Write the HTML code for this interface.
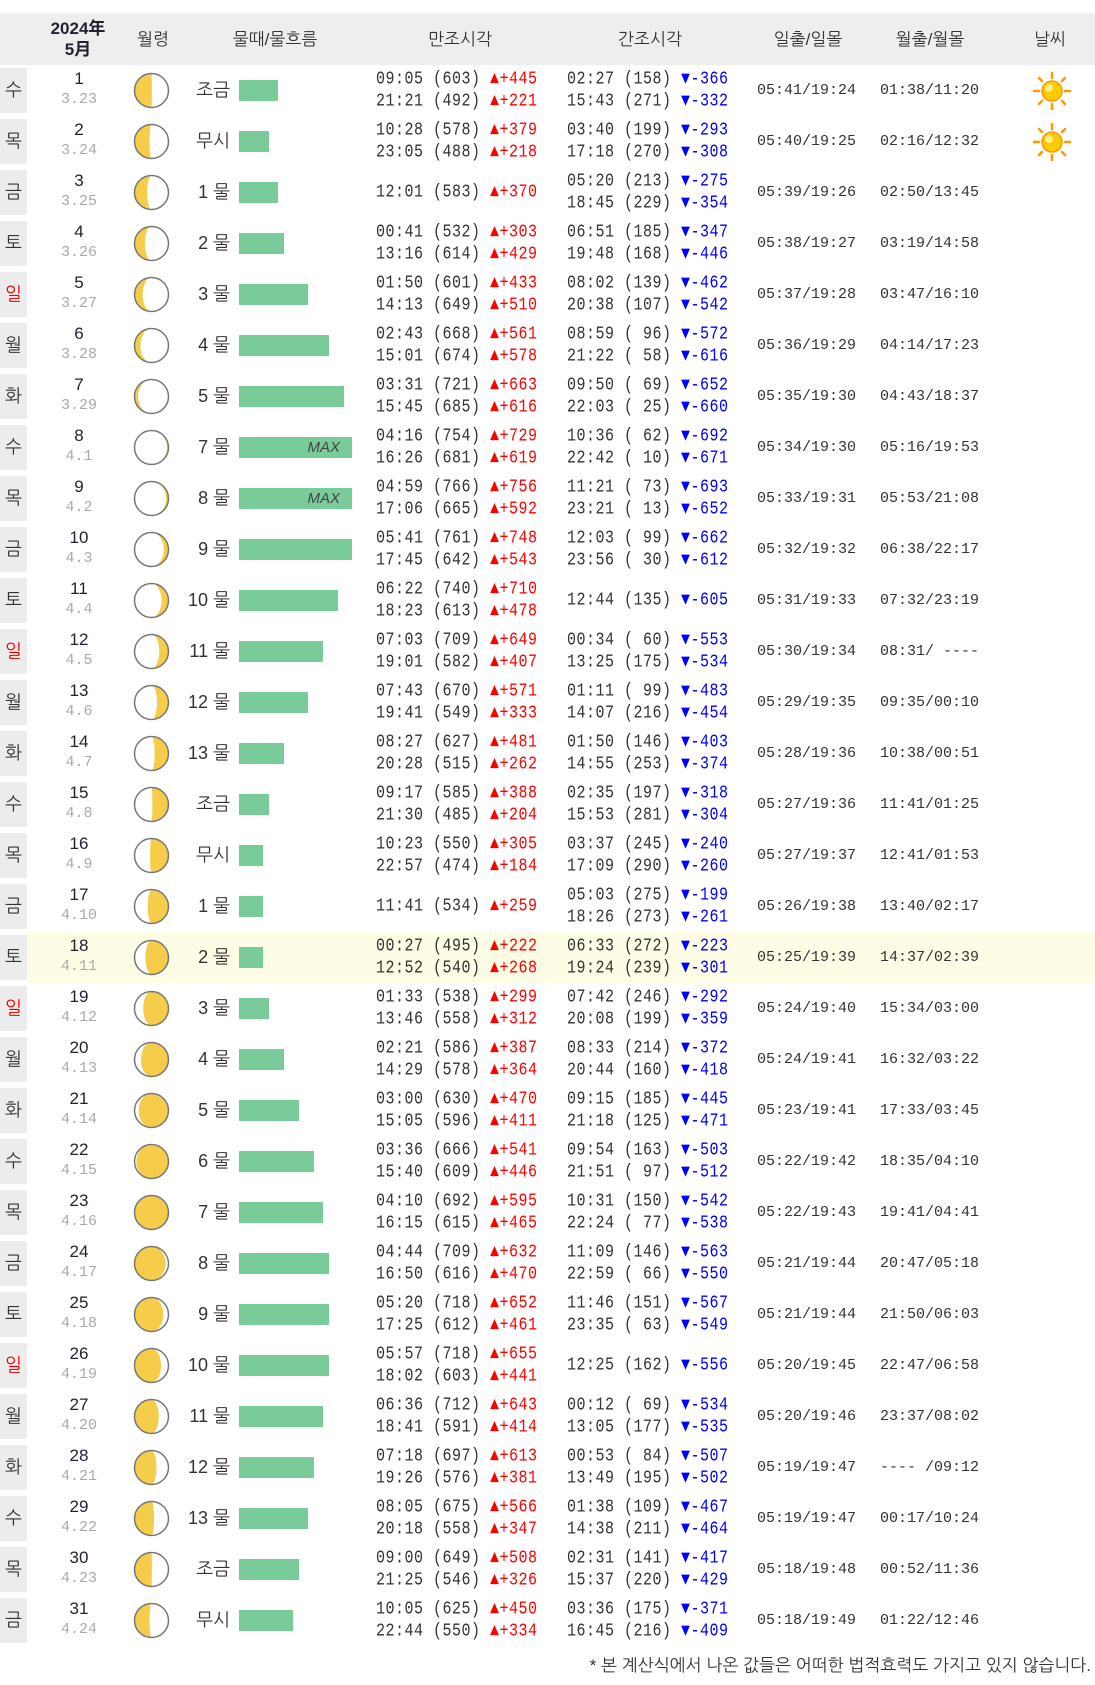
<!DOCTYPE html>
<html><head><meta charset="utf-8"><style>
*{margin:0;padding:0;box-sizing:border-box}
body{width:1095px;height:1685px;background:#fff;font-family:"Liberation Sans","NanumGothic","Noto Sans CJK KR",sans-serif;color:#333;position:relative;overflow:hidden}
.hd{position:absolute;left:0;top:13px;width:1095px;height:52px;background:#eee;font-size:17px}
.hd div{position:absolute;top:0;height:52px;display:flex;align-items:center;justify-content:center;text-align:center}
.rows{position:absolute;left:0;top:65px;width:1095px}
.r{position:relative;height:51px}
.r.hl{background:linear-gradient(to right,#fff 0,#fff 28px,#fdfce4 28px)}
.w{position:absolute;left:0;top:3px;width:27px;height:45px;background:#ececec;font-size:18px;display:flex;align-items:center;justify-content:center;color:#333}
.w.red{color:#e00}
.d{position:absolute;left:54px;width:50px;top:3px;text-align:center;font-size:17px;color:#223;line-height:21px}
.d i{font-style:normal;color:#aaa;font-family:"Liberation Mono",monospace;font-size:15px;display:block}
.m{position:absolute;left:133px;top:7px;width:37px;height:37px}
.n{position:absolute;left:160px;width:70px;text-align:right;line-height:51px;font-size:18px;color:#333}
.b{position:absolute;left:239px;top:15px;height:21px;background:#79cb9a}
.b span{position:absolute;right:12px;top:0;font-style:italic;font-size:15px;color:#444;line-height:21px}
.t{position:absolute;top:0;height:51px;display:flex;flex-direction:column;justify-content:center;font-family:"Liberation Mono",monospace;font-size:15px;letter-spacing:0.5px;line-height:22px;white-space:pre;color:#333}
.t div{transform:scaleY(1.2)}
.t b{font-weight:normal}
.h{left:376px}.l{left:567px}
.u{color:#f00}.v{color:#00f}
.s{position:absolute;top:0;line-height:51px;font-family:"Liberation Mono",monospace;font-size:15px;color:#333;white-space:pre}
.s1{left:757px}.s2{left:880px}
.sun{position:absolute;left:1032px;top:6px}
.ft{position:absolute;right:4px;top:1655px;font-size:17px;color:#333}
</style></head><body>
<div class="hd">
<div style="left:48px;width:60px;font-weight:bold;line-height:21px;color:#223">2024年<br>5月</div>
<div style="left:128px;width:50px">월령</div>
<div style="left:210px;width:130px">물때/물흐름</div>
<div style="left:400px;width:120px">만조시각</div>
<div style="left:590px;width:120px">간조시각</div>
<div style="left:758px;width:100px">일출/일몰</div>
<div style="left:880px;width:100px">월출/월몰</div>
<div style="left:1020px;width:60px">날씨</div>
</div>
<div class="rows">
<div class="r"><div class="w">수</div><div class="d">1<i>3.23</i></div><svg class="m"></svg><div class="n">조금</div><div class="b" style="width:39px"></div><div class="t h"><div>09:05 (603) <b class="u">▲+445</b></div><div>21:21 (492) <b class="u">▲+221</b></div></div><div class="t l"><div>02:27 (158) <b class="v">▼-366</b></div><div>15:43 (271) <b class="v">▼-332</b></div></div><div class="s s1">05:41/19:24</div><div class="s s2">01:38/11:20</div><svg class="sun" width="40" height="40" viewBox="0 0 40 40"><g stroke="#f90" stroke-width="2.5" stroke-linecap="round"><line x1="20" y1="2" x2="20" y2="7"/><line x1="20" y1="33" x2="20" y2="38"/><line x1="2" y1="20" x2="7" y2="20"/><line x1="33" y1="20" x2="38" y2="20"/><line x1="7" y1="7" x2="10" y2="10"/><line x1="30" y1="30" x2="33" y2="33"/><line x1="33" y1="7" x2="30" y2="10"/><line x1="7" y1="33" x2="10" y2="30"/></g><circle cx="20" cy="20" r="10" fill="#fc0" stroke="#f90" stroke-width="1.5"/><circle cx="17" cy="17" r="4" fill="#fe8"/></svg></div>
<div class="r"><div class="w">목</div><div class="d">2<i>3.24</i></div><svg class="m"></svg><div class="n">무시</div><div class="b" style="width:30px"></div><div class="t h"><div>10:28 (578) <b class="u">▲+379</b></div><div>23:05 (488) <b class="u">▲+218</b></div></div><div class="t l"><div>03:40 (199) <b class="v">▼-293</b></div><div>17:18 (270) <b class="v">▼-308</b></div></div><div class="s s1">05:40/19:25</div><div class="s s2">02:16/12:32</div><svg class="sun" width="40" height="40" viewBox="0 0 40 40"><g stroke="#f90" stroke-width="2.5" stroke-linecap="round"><line x1="20" y1="2" x2="20" y2="7"/><line x1="20" y1="33" x2="20" y2="38"/><line x1="2" y1="20" x2="7" y2="20"/><line x1="33" y1="20" x2="38" y2="20"/><line x1="7" y1="7" x2="10" y2="10"/><line x1="30" y1="30" x2="33" y2="33"/><line x1="33" y1="7" x2="30" y2="10"/><line x1="7" y1="33" x2="10" y2="30"/></g><circle cx="20" cy="20" r="10" fill="#fc0" stroke="#f90" stroke-width="1.5"/><circle cx="17" cy="17" r="4" fill="#fe8"/></svg></div>
<div class="r"><div class="w">금</div><div class="d">3<i>3.25</i></div><svg class="m"></svg><div class="n">1 물</div><div class="b" style="width:39px"></div><div class="t h"><div>12:01 (583) <b class="u">▲+370</b></div></div><div class="t l"><div>05:20 (213) <b class="v">▼-275</b></div><div>18:45 (229) <b class="v">▼-354</b></div></div><div class="s s1">05:39/19:26</div><div class="s s2">02:50/13:45</div></div>
<div class="r"><div class="w">토</div><div class="d">4<i>3.26</i></div><svg class="m"></svg><div class="n">2 물</div><div class="b" style="width:45px"></div><div class="t h"><div>00:41 (532) <b class="u">▲+303</b></div><div>13:16 (614) <b class="u">▲+429</b></div></div><div class="t l"><div>06:51 (185) <b class="v">▼-347</b></div><div>19:48 (168) <b class="v">▼-446</b></div></div><div class="s s1">05:38/19:27</div><div class="s s2">03:19/14:58</div></div>
<div class="r"><div class="w red">일</div><div class="d">5<i>3.27</i></div><svg class="m"></svg><div class="n">3 물</div><div class="b" style="width:69px"></div><div class="t h"><div>01:50 (601) <b class="u">▲+433</b></div><div>14:13 (649) <b class="u">▲+510</b></div></div><div class="t l"><div>08:02 (139) <b class="v">▼-462</b></div><div>20:38 (107) <b class="v">▼-542</b></div></div><div class="s s1">05:37/19:28</div><div class="s s2">03:47/16:10</div></div>
<div class="r"><div class="w">월</div><div class="d">6<i>3.28</i></div><svg class="m"></svg><div class="n">4 물</div><div class="b" style="width:90px"></div><div class="t h"><div>02:43 (668) <b class="u">▲+561</b></div><div>15:01 (674) <b class="u">▲+578</b></div></div><div class="t l"><div>08:59 ( 96) <b class="v">▼-572</b></div><div>21:22 ( 58) <b class="v">▼-616</b></div></div><div class="s s1">05:36/19:29</div><div class="s s2">04:14/17:23</div></div>
<div class="r"><div class="w">화</div><div class="d">7<i>3.29</i></div><svg class="m"></svg><div class="n">5 물</div><div class="b" style="width:105px"></div><div class="t h"><div>03:31 (721) <b class="u">▲+663</b></div><div>15:45 (685) <b class="u">▲+616</b></div></div><div class="t l"><div>09:50 ( 69) <b class="v">▼-652</b></div><div>22:03 ( 25) <b class="v">▼-660</b></div></div><div class="s s1">05:35/19:30</div><div class="s s2">04:43/18:37</div></div>
<div class="r"><div class="w">수</div><div class="d">8<i>4.1</i></div><svg class="m"></svg><div class="n">7 물</div><div class="b" style="width:113px"><span>MAX</span></div><div class="t h"><div>04:16 (754) <b class="u">▲+729</b></div><div>16:26 (681) <b class="u">▲+619</b></div></div><div class="t l"><div>10:36 ( 62) <b class="v">▼-692</b></div><div>22:42 ( 10) <b class="v">▼-671</b></div></div><div class="s s1">05:34/19:30</div><div class="s s2">05:16/19:53</div></div>
<div class="r"><div class="w">목</div><div class="d">9<i>4.2</i></div><svg class="m"></svg><div class="n">8 물</div><div class="b" style="width:113px"><span>MAX</span></div><div class="t h"><div>04:59 (766) <b class="u">▲+756</b></div><div>17:06 (665) <b class="u">▲+592</b></div></div><div class="t l"><div>11:21 ( 73) <b class="v">▼-693</b></div><div>23:21 ( 13) <b class="v">▼-652</b></div></div><div class="s s1">05:33/19:31</div><div class="s s2">05:53/21:08</div></div>
<div class="r"><div class="w">금</div><div class="d">10<i>4.3</i></div><svg class="m"></svg><div class="n">9 물</div><div class="b" style="width:113px"></div><div class="t h"><div>05:41 (761) <b class="u">▲+748</b></div><div>17:45 (642) <b class="u">▲+543</b></div></div><div class="t l"><div>12:03 ( 99) <b class="v">▼-662</b></div><div>23:56 ( 30) <b class="v">▼-612</b></div></div><div class="s s1">05:32/19:32</div><div class="s s2">06:38/22:17</div></div>
<div class="r"><div class="w">토</div><div class="d">11<i>4.4</i></div><svg class="m"></svg><div class="n">10 물</div><div class="b" style="width:99px"></div><div class="t h"><div>06:22 (740) <b class="u">▲+710</b></div><div>18:23 (613) <b class="u">▲+478</b></div></div><div class="t l"><div>12:44 (135) <b class="v">▼-605</b></div></div><div class="s s1">05:31/19:33</div><div class="s s2">07:32/23:19</div></div>
<div class="r"><div class="w red">일</div><div class="d">12<i>4.5</i></div><svg class="m"></svg><div class="n">11 물</div><div class="b" style="width:84px"></div><div class="t h"><div>07:03 (709) <b class="u">▲+649</b></div><div>19:01 (582) <b class="u">▲+407</b></div></div><div class="t l"><div>00:34 ( 60) <b class="v">▼-553</b></div><div>13:25 (175) <b class="v">▼-534</b></div></div><div class="s s1">05:30/19:34</div><div class="s s2">08:31/ ----</div></div>
<div class="r"><div class="w">월</div><div class="d">13<i>4.6</i></div><svg class="m"></svg><div class="n">12 물</div><div class="b" style="width:69px"></div><div class="t h"><div>07:43 (670) <b class="u">▲+571</b></div><div>19:41 (549) <b class="u">▲+333</b></div></div><div class="t l"><div>01:11 ( 99) <b class="v">▼-483</b></div><div>14:07 (216) <b class="v">▼-454</b></div></div><div class="s s1">05:29/19:35</div><div class="s s2">09:35/00:10</div></div>
<div class="r"><div class="w">화</div><div class="d">14<i>4.7</i></div><svg class="m"></svg><div class="n">13 물</div><div class="b" style="width:45px"></div><div class="t h"><div>08:27 (627) <b class="u">▲+481</b></div><div>20:28 (515) <b class="u">▲+262</b></div></div><div class="t l"><div>01:50 (146) <b class="v">▼-403</b></div><div>14:55 (253) <b class="v">▼-374</b></div></div><div class="s s1">05:28/19:36</div><div class="s s2">10:38/00:51</div></div>
<div class="r"><div class="w">수</div><div class="d">15<i>4.8</i></div><svg class="m"></svg><div class="n">조금</div><div class="b" style="width:30px"></div><div class="t h"><div>09:17 (585) <b class="u">▲+388</b></div><div>21:30 (485) <b class="u">▲+204</b></div></div><div class="t l"><div>02:35 (197) <b class="v">▼-318</b></div><div>15:53 (281) <b class="v">▼-304</b></div></div><div class="s s1">05:27/19:36</div><div class="s s2">11:41/01:25</div></div>
<div class="r"><div class="w">목</div><div class="d">16<i>4.9</i></div><svg class="m"></svg><div class="n">무시</div><div class="b" style="width:24px"></div><div class="t h"><div>10:23 (550) <b class="u">▲+305</b></div><div>22:57 (474) <b class="u">▲+184</b></div></div><div class="t l"><div>03:37 (245) <b class="v">▼-240</b></div><div>17:09 (290) <b class="v">▼-260</b></div></div><div class="s s1">05:27/19:37</div><div class="s s2">12:41/01:53</div></div>
<div class="r"><div class="w">금</div><div class="d">17<i>4.10</i></div><svg class="m"></svg><div class="n">1 물</div><div class="b" style="width:24px"></div><div class="t h"><div>11:41 (534) <b class="u">▲+259</b></div></div><div class="t l"><div>05:03 (275) <b class="v">▼-199</b></div><div>18:26 (273) <b class="v">▼-261</b></div></div><div class="s s1">05:26/19:38</div><div class="s s2">13:40/02:17</div></div>
<div class="r hl"><div class="w">토</div><div class="d">18<i>4.11</i></div><svg class="m"></svg><div class="n">2 물</div><div class="b" style="width:24px"></div><div class="t h"><div>00:27 (495) <b class="u">▲+222</b></div><div>12:52 (540) <b class="u">▲+268</b></div></div><div class="t l"><div>06:33 (272) <b class="v">▼-223</b></div><div>19:24 (239) <b class="v">▼-301</b></div></div><div class="s s1">05:25/19:39</div><div class="s s2">14:37/02:39</div></div>
<div class="r"><div class="w red">일</div><div class="d">19<i>4.12</i></div><svg class="m"></svg><div class="n">3 물</div><div class="b" style="width:30px"></div><div class="t h"><div>01:33 (538) <b class="u">▲+299</b></div><div>13:46 (558) <b class="u">▲+312</b></div></div><div class="t l"><div>07:42 (246) <b class="v">▼-292</b></div><div>20:08 (199) <b class="v">▼-359</b></div></div><div class="s s1">05:24/19:40</div><div class="s s2">15:34/03:00</div></div>
<div class="r"><div class="w">월</div><div class="d">20<i>4.13</i></div><svg class="m"></svg><div class="n">4 물</div><div class="b" style="width:45px"></div><div class="t h"><div>02:21 (586) <b class="u">▲+387</b></div><div>14:29 (578) <b class="u">▲+364</b></div></div><div class="t l"><div>08:33 (214) <b class="v">▼-372</b></div><div>20:44 (160) <b class="v">▼-418</b></div></div><div class="s s1">05:24/19:41</div><div class="s s2">16:32/03:22</div></div>
<div class="r"><div class="w">화</div><div class="d">21<i>4.14</i></div><svg class="m"></svg><div class="n">5 물</div><div class="b" style="width:60px"></div><div class="t h"><div>03:00 (630) <b class="u">▲+470</b></div><div>15:05 (596) <b class="u">▲+411</b></div></div><div class="t l"><div>09:15 (185) <b class="v">▼-445</b></div><div>21:18 (125) <b class="v">▼-471</b></div></div><div class="s s1">05:23/19:41</div><div class="s s2">17:33/03:45</div></div>
<div class="r"><div class="w">수</div><div class="d">22<i>4.15</i></div><svg class="m"></svg><div class="n">6 물</div><div class="b" style="width:75px"></div><div class="t h"><div>03:36 (666) <b class="u">▲+541</b></div><div>15:40 (609) <b class="u">▲+446</b></div></div><div class="t l"><div>09:54 (163) <b class="v">▼-503</b></div><div>21:51 ( 97) <b class="v">▼-512</b></div></div><div class="s s1">05:22/19:42</div><div class="s s2">18:35/04:10</div></div>
<div class="r"><div class="w">목</div><div class="d">23<i>4.16</i></div><svg class="m"></svg><div class="n">7 물</div><div class="b" style="width:84px"></div><div class="t h"><div>04:10 (692) <b class="u">▲+595</b></div><div>16:15 (615) <b class="u">▲+465</b></div></div><div class="t l"><div>10:31 (150) <b class="v">▼-542</b></div><div>22:24 ( 77) <b class="v">▼-538</b></div></div><div class="s s1">05:22/19:43</div><div class="s s2">19:41/04:41</div></div>
<div class="r"><div class="w">금</div><div class="d">24<i>4.17</i></div><svg class="m"></svg><div class="n">8 물</div><div class="b" style="width:90px"></div><div class="t h"><div>04:44 (709) <b class="u">▲+632</b></div><div>16:50 (616) <b class="u">▲+470</b></div></div><div class="t l"><div>11:09 (146) <b class="v">▼-563</b></div><div>22:59 ( 66) <b class="v">▼-550</b></div></div><div class="s s1">05:21/19:44</div><div class="s s2">20:47/05:18</div></div>
<div class="r"><div class="w">토</div><div class="d">25<i>4.18</i></div><svg class="m"></svg><div class="n">9 물</div><div class="b" style="width:90px"></div><div class="t h"><div>05:20 (718) <b class="u">▲+652</b></div><div>17:25 (612) <b class="u">▲+461</b></div></div><div class="t l"><div>11:46 (151) <b class="v">▼-567</b></div><div>23:35 ( 63) <b class="v">▼-549</b></div></div><div class="s s1">05:21/19:44</div><div class="s s2">21:50/06:03</div></div>
<div class="r"><div class="w red">일</div><div class="d">26<i>4.19</i></div><svg class="m"></svg><div class="n">10 물</div><div class="b" style="width:90px"></div><div class="t h"><div>05:57 (718) <b class="u">▲+655</b></div><div>18:02 (603) <b class="u">▲+441</b></div></div><div class="t l"><div>12:25 (162) <b class="v">▼-556</b></div></div><div class="s s1">05:20/19:45</div><div class="s s2">22:47/06:58</div></div>
<div class="r"><div class="w">월</div><div class="d">27<i>4.20</i></div><svg class="m"></svg><div class="n">11 물</div><div class="b" style="width:84px"></div><div class="t h"><div>06:36 (712) <b class="u">▲+643</b></div><div>18:41 (591) <b class="u">▲+414</b></div></div><div class="t l"><div>00:12 ( 69) <b class="v">▼-534</b></div><div>13:05 (177) <b class="v">▼-535</b></div></div><div class="s s1">05:20/19:46</div><div class="s s2">23:37/08:02</div></div>
<div class="r"><div class="w">화</div><div class="d">28<i>4.21</i></div><svg class="m"></svg><div class="n">12 물</div><div class="b" style="width:75px"></div><div class="t h"><div>07:18 (697) <b class="u">▲+613</b></div><div>19:26 (576) <b class="u">▲+381</b></div></div><div class="t l"><div>00:53 ( 84) <b class="v">▼-507</b></div><div>13:49 (195) <b class="v">▼-502</b></div></div><div class="s s1">05:19/19:47</div><div class="s s2">---- /09:12</div></div>
<div class="r"><div class="w">수</div><div class="d">29<i>4.22</i></div><svg class="m"></svg><div class="n">13 물</div><div class="b" style="width:69px"></div><div class="t h"><div>08:05 (675) <b class="u">▲+566</b></div><div>20:18 (558) <b class="u">▲+347</b></div></div><div class="t l"><div>01:38 (109) <b class="v">▼-467</b></div><div>14:38 (211) <b class="v">▼-464</b></div></div><div class="s s1">05:19/19:47</div><div class="s s2">00:17/10:24</div></div>
<div class="r"><div class="w">목</div><div class="d">30<i>4.23</i></div><svg class="m"></svg><div class="n">조금</div><div class="b" style="width:60px"></div><div class="t h"><div>09:00 (649) <b class="u">▲+508</b></div><div>21:25 (546) <b class="u">▲+326</b></div></div><div class="t l"><div>02:31 (141) <b class="v">▼-417</b></div><div>15:37 (220) <b class="v">▼-429</b></div></div><div class="s s1">05:18/19:48</div><div class="s s2">00:52/11:36</div></div>
<div class="r"><div class="w">금</div><div class="d">31<i>4.24</i></div><svg class="m"></svg><div class="n">무시</div><div class="b" style="width:54px"></div><div class="t h"><div>10:05 (625) <b class="u">▲+450</b></div><div>22:44 (550) <b class="u">▲+334</b></div></div><div class="t l"><div>03:36 (175) <b class="v">▼-371</b></div><div>16:45 (216) <b class="v">▼-409</b></div></div><div class="s s1">05:18/19:49</div><div class="s s2">01:22/12:46</div></div>
</div>
<div class="ft">* 본 계산식에서 나온 값들은 어떠한 법적효력도 가지고 있지 않습니다.</div>
<script>
var ages=[22,23,24,25,26,27,28,0.6,1,2,3,4,5,6,7,8,9,10,11,12,13,14,15,16,17,18,19,20,21,22,23];
var ms=document.querySelectorAll('svg.m');
ms.forEach(function(s,i){
 var p=ages[i]/29.53,cx=18.5,cy=18.5,r=17,k,d,sw;
 if(p<0.5){var o=1-4*p;k=Math.max(Math.abs(o)*r,0.01);sw=o>0?0:1;d='M'+cx+','+(cy-r)+' A'+r+','+r+' 0 0 1 '+cx+','+(cy+r)+' A'+k+','+r+' 0 0 '+sw+' '+cx+','+(cy-r)+'Z';}
 else{var o2=4*p-3;k=Math.max(Math.abs(o2)*r,0.01);sw=o2>0?1:0;d='M'+cx+','+(cy-r)+' A'+r+','+r+' 0 0 0 '+cx+','+(cy+r)+' A'+k+','+r+' 0 0 '+sw+' '+cx+','+(cy-r)+'Z';}
 s.setAttribute('viewBox','0 0 37 37');
 s.innerHTML='<circle cx="18.5" cy="18.5" r="17" fill="#fff"/><path d="'+d+'" fill="#f5cd4a"/><circle cx="18.5" cy="18.5" r="17" fill="none" stroke="#777" stroke-width="1.5"/>';
});
</script>
</body></html>
